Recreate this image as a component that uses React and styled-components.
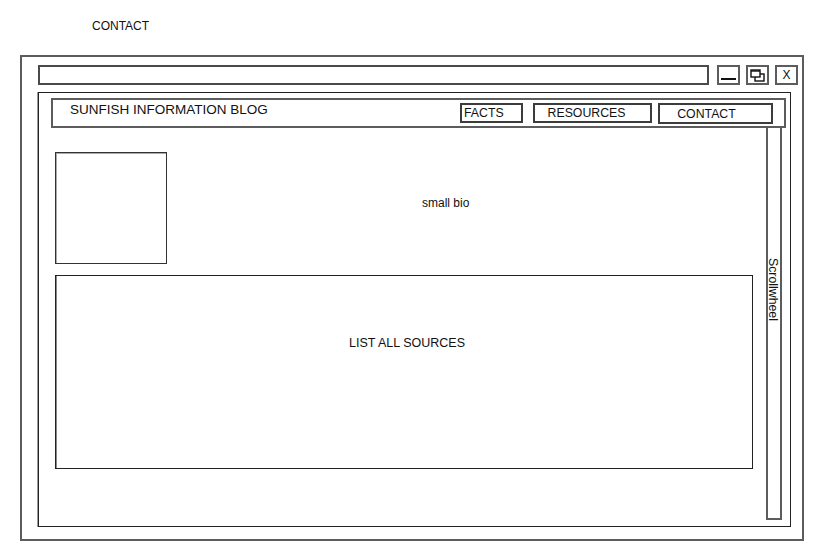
import styled, { createGlobalStyle } from "styled-components";

const GlobalStyle = createGlobalStyle`
  body {
    margin: 0;
    background: #fff;
    font-family: "Liberation Sans", Arial, sans-serif;
    color: #111;
  }
`;

const Page = styled.div`
  width: 816px;
  height: 547px;
  overflow: hidden;
`;

const TopLabel = styled.div`
  padding: 19px 0 0 92px;
  font-size: 12px;
  line-height: 14px;
`;

const Window = styled.div`
  box-sizing: border-box;
  margin: 22px 0 0 20px;
  width: 784px;
  height: 486px;
  border: 2px solid #5c5c5c;
  padding: 8px 0 0 16px;
`;

const TitleRow = styled.div`
  display: flex;
  align-items: center;
  height: 20px;
`;

const AddressBar = styled.div`
  box-sizing: border-box;
  width: 671px;
  height: 20px;
  border: 2px solid #4a4a4a;
`;

const WinButton = styled.div`
  box-sizing: border-box;
  width: 23px;
  height: 20px;
  margin-left: ${(p) => p.$gap}px;
  border: 2px solid #5c5c5c;
  display: flex;
  align-items: center;
  justify-content: center;
  font-size: 12px;
  color: #111;
`;

const MinLine = styled.span`
  display: block;
  width: 15px;
  height: 2px;
  background: #111;
  margin-top: 8px;
`;

const Panel = styled.div`
  box-sizing: border-box;
  margin-top: 7px;
  width: 753px;
  height: 435px;
  border: 1px solid #222;
  box-shadow: -1px 0 0 #999;
  padding: 5px 0 0 12px;
`;

const Nav = styled.div`
  box-sizing: border-box;
  width: 735px;
  height: 30px;
  border: 2px solid #5c5c5c;
  display: flex;
  align-items: flex-start;
  padding: 3px 11px 0 17px;
`;

const BlogTitle = styled.div`
  flex: 1;
  font-size: 13.5px;
  line-height: 16px;
  margin-top: -1px;
`;

const NavItem = styled.div`
  box-sizing: border-box;
  width: ${(p) => p.$w}px;
  height: ${(p) => p.$h || 20}px;
  margin-left: ${(p) => p.$gap}px;
  border: 2px solid #3c3c3c;
  font-size: 12.3px;
  line-height: 14px;
  padding: ${(p) => p.$pad};
  text-align: ${(p) => p.$align || "left"};
`;

const Body = styled.div`
  display: flex;
  width: 735px;
`;

const Main = styled.div`
  flex: 1;
  padding: 24px 0 0 4px;
`;

const BioRow = styled.div`
  display: flex;
`;

const Photo = styled.div`
  box-sizing: border-box;
  width: 112px;
  height: 112px;
  border: 1px solid #333;
  box-shadow: inset 1px 1px 0 #aaa;
`;

const Bio = styled.div`
  flex: 1;
  font-size: 12px;
  line-height: 14px;
  padding: 44px 0 0 255px;
`;

const Sources = styled.div`
  box-sizing: border-box;
  margin-top: 11px;
  width: 698px;
  height: 194px;
  border: 1px solid #222;
  box-shadow: inset 1px 0 0 #888;
  font-size: 12.5px;
  line-height: 14px;
  padding: 60px 0 0 293px;
`;

const Scrollbar = styled.div`
  box-sizing: border-box;
  width: 16px;
  height: 392px;
  margin-right: 4px;
  border: 2px solid #5c5c5c;
  border-top: none;
  padding-top: 130px;
  display: flex;
  justify-content: center;
`;

const ScrollText = styled.span`
  writing-mode: vertical-rl;
  font-size: 12.3px;
  line-height: 12px;
  margin-left: -2px;
`;

function RestoreIcon() {
  return (
    <svg width="15" height="13" viewBox="0 0 15 13">
      <rect x="5" y="5" width="9" height="7" fill="none" stroke="#111" strokeWidth="1.4" />
      <rect x="1" y="1" width="9" height="7" fill="#fff" stroke="#111" strokeWidth="1.4" />
      <line x1="1" y1="2" x2="10" y2="2" stroke="#111" strokeWidth="1.4" />
    </svg>
  );
}

export default function App() {
  return (
    <Page>
      <GlobalStyle />
      <TopLabel>CONTACT</TopLabel>
      <Window>
        <TitleRow>
          <AddressBar />
          <WinButton $gap={8}>
            <MinLine />
          </WinButton>
          <WinButton $gap={6}>
            <RestoreIcon />
          </WinButton>
          <WinButton $gap={6}>X</WinButton>
        </TitleRow>
        <Panel>
          <Nav>
            <BlogTitle>SUNFISH INFORMATION BLOG</BlogTitle>
            <NavItem $w={63} $gap={0} $pad="1px 0 0 2px">
              FACTS
            </NavItem>
            <NavItem $w={119} $gap={10} $pad="1px 12px 0 0" $align="center">
              RESOURCES
            </NavItem>
            <NavItem $w={115} $h={21} $gap={6} $pad="2px 18px 0 0" $align="center">
              CONTACT
            </NavItem>
          </Nav>
          <Body>
            <Main>
              <BioRow>
                <Photo />
                <Bio>small bio</Bio>
              </BioRow>
              <Sources>LIST ALL SOURCES</Sources>
            </Main>
            <Scrollbar>
              <ScrollText>Scrollwheel</ScrollText>
            </Scrollbar>
          </Body>
        </Panel>
      </Window>
    </Page>
  );
}
